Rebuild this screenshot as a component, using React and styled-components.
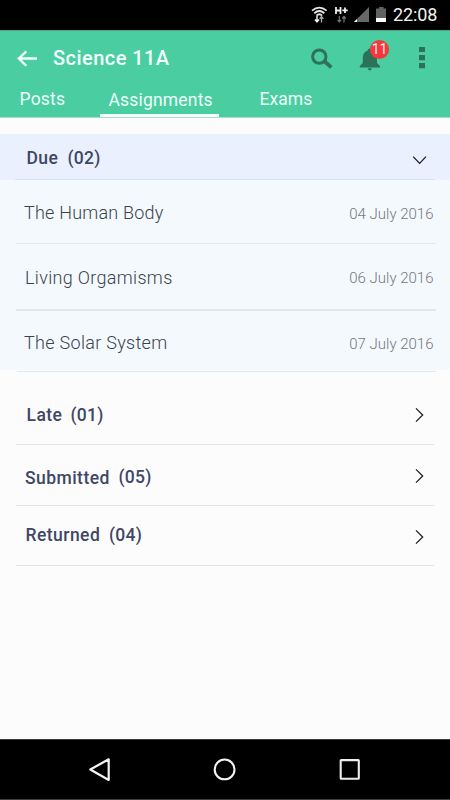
import React from 'react';
import styled, { createGlobalStyle } from 'styled-components';

const GlobalStyle = createGlobalStyle`
  * { box-sizing: border-box; }
  body { margin: 0; background: #fcfcfd; }
`;

const Screen = styled.div`
  width: 450px;
  height: 800px;
  display: flex;
  flex-direction: column;
  overflow: hidden;
  background: #fcfcfd;
  font-family: Roboto, "Noto Sans", sans-serif;
`;

const StatusBar = styled.div`
  height: 30px;
  flex: none;
  display: flex;
  justify-content: flex-end;
  align-items: flex-start;
  padding-right: 12px;
  background: #000;
`;

const Clock = styled.time`
  width: 45px;
  margin-left: 5px;
  padding-top: 5px;
  color: #f2f2f2;
  font-size: 18px;
  line-height: 20px;
  letter-spacing: -0.1px;
  white-space: nowrap;
`;

const Header = styled.header`
  height: 88px;
  flex: none;
  display: flex;
  flex-direction: column;
  background: #49cda1;
  border-top: 1px solid #45a688;
  border-bottom: 1px solid #a9dccb;
`;

const TitleBar = styled.div`
  height: 53px;
  display: flex;
  justify-content: space-between;
  padding-left: 16px;
`;

const TitleGroup = styled.div`
  display: flex;
`;

const Title = styled.h1`
  margin: 17px 0 0 13px;
  color: #f3fffb;
  font-size: 20px;
  font-weight: 500;
  line-height: 20px;
  letter-spacing: 0.45px;
`;

const Actions = styled.div`
  width: 142px;
  display: flex;
`;

const BellButton = styled.div`
  position: relative;
  width: 42px;
`;

const Badge = styled.span`
  position: absolute;
  left: 12px;
  top: 9px;
  width: 19px;
  height: 19px;
  border-radius: 50%;
  background: #f5383d;
  color: #ffe9e6;
  font-size: 14px;
  line-height: 19px;
  text-align: center;
`;

const Tabs = styled.nav`
  display: flex;
  height: 33px;
`;

const Tab = styled.div`
  width: ${(p) => p.$width}px;
  margin-left: ${(p) => p.$gap}px;
  padding: ${(p) => p.$top}px 0 0 ${(p) => p.$inset || 0}px;
  border-bottom: 3px solid ${(p) => (p.$active ? '#f4fffc' : 'transparent')};
  color: #effffa;
  font-size: 17.5px;
  line-height: 20px;
  letter-spacing: ${(p) => p.$spacing}px;
  white-space: nowrap;
`;

const Content = styled.main`
  flex: 1;
  padding-top: 16px;
`;

const Row = styled.div`
  height: ${(p) => p.$height}px;
  display: flex;
  flex-direction: column;
  background: ${(p) => p.$tone || 'transparent'};
`;

const RowBody = styled.div`
  flex: 1;
  min-height: 0;
  display: flex;
  justify-content: space-between;
  align-items: flex-start;
  padding-left: ${(p) => p.$left}px;
`;

const Rule = styled.div`
  height: ${(p) => p.$size || 1}px;
  flex: none;
  margin: 0 ${(p) => 450 - p.$to}px 0 ${(p) => p.$from}px;
  background: ${(p) => p.$color || '#dfe4e7'};
`;

const Section = styled.h2`
  display: flex;
  margin: ${(p) => p.$top}px 0 0;
  color: #3e4764;
  font-size: 17.5px;
  font-weight: 500;
  line-height: 20px;
  letter-spacing: 0.45px;
`;

const SectionName = styled.span`
  width: ${(p) => p.$width}px;
  white-space: nowrap;
`;

const Count = styled.span`
  margin-top: ${(p) => p.$shift || 0}px;
  letter-spacing: 0.3px;
`;

const ItemName = styled.span`
  margin-top: ${(p) => p.$top}px;
  color: #39434d;
  font-size: 18px;
  font-weight: 300;
  line-height: 20px;
  letter-spacing: ${(p) => p.$spacing}px;
`;

const ItemDate = styled.time`
  margin: ${(p) => p.$top}px 16.5px 0 0;
  color: #73787d;
  font-size: 15px;
  font-weight: 300;
  line-height: 20px;
`;

const ChevronSlot = styled.span`
  width: 38px;
  margin-top: ${(p) => p.$top}px;
  line-height: 0;
`;

const NavBar = styled.footer`
  height: 61px;
  flex: none;
  display: flex;
  padding-left: 62px;
  background: #000;
  border-top: 1px solid #3c3c3c;
  border-bottom: 1px solid #3c3c3c;
`;

const NavKey = styled.div`
  width: 125px;
  padding: 14px 0 0 22px;
  line-height: 0;
`;

const StatusIcons = () => (
  <svg width="80" height="30" viewBox="308 0 80 30">
    <g fill="none" stroke="#e8e8e8" strokeWidth="1.8">
      <path d="M312 10.6Q319.300 4.600 326.600 10.600" />
      <path d="M314.300 13.200Q319.300 8.900 324.300 13.200" />
      <path d="M316.500 15.600Q319.300 13 322.100 15.600" />
    </g>
    <path d="M317 16v5.500M315 19.500l2 2.500 2-2.500" fill="none" stroke="#fff" strokeWidth="1.400" />
    <path d="M321.500 22.500v-5M319.600 18.800l1.900-2.300 1.900 2.300" fill="none" stroke="#aaa" strokeWidth="1.300" />
    <path d="M336 7v7M340.500 7v7M336 10.500h4.500M342.300 10.300h5.400M345 7.600v5.400" fill="none" stroke="#eee" strokeWidth="1.800" />
    <path d="M339.300 16v6M337.500 19.800l1.800 2 1.800-2M344 22.500v-6M342.200 18.500l1.800-2 1.800 2" fill="none" stroke="#777" strokeWidth="1.200" />
    <path d="M369 7v15h-15z" fill="#66696a" />
    <path d="M357 19v3h-3z" fill="#fff" />
    <path d="M379 7h4.500v1.500h2.500v9.500h-10v-9.500h3z" fill="#5f6263" />
    <path d="M376 18h10v4h-10z" fill="#fff" />
  </svg>
);

const BackIcon = () => (
  <svg width="24" height="53" viewBox="16 31 24 53">
    <path d="M37 58.500H18.800M26.300 51.300L18.800 58.500L26.300 65.800" fill="none" stroke="#f3fffb" strokeWidth="2.300" />
  </svg>
);

const SearchIcon = () => (
  <svg width="50" height="53" viewBox="308 31 50 53">
    <circle cx="319.300" cy="56.600" r="6.700" fill="none" stroke="#2d7259" strokeWidth="3" />
    <path d="M324.200 61L331.300 67.300" stroke="#2d7259" strokeWidth="3.800" />
  </svg>
);

const BellIcon = () => (
  <svg width="42" height="53" viewBox="358 31 42 53">
    <path d="M369.700 48.500c1.300 0 2 .8 2 2 3.500 1 5.300 3.700 5.300 7.300v5.200l3 3v1.500h-20.200v-1.500l3-3v-5.200c0-3.600 1.600-6.300 4.900-7.300 0-1.200.7-2 2-2z" fill="#2c7159" />
    <path d="M367.800 68.300h4q-.3 2.300-2 2.300t-2-2.300z" fill="#2c7159" />
  </svg>
);

const MoreIcon = () => (
  <svg width="50" height="53" viewBox="400 31 50 53">
    <path d="M419 47h6v5h-6zM419 55h6v5.300h-6zM419 63h6v5.300h-6z" fill="#2c7159" />
  </svg>
);

const Chevron = ({ down }) => (
  <svg width="16" height="16" viewBox="0 0 16 16">
    <path
      d={down ? 'M1.200 4.700L7.600 11.300L14 4.700' : 'M4 1.400L10.700 8L4 14.600'}
      fill="none"
      stroke="#15171c"
      strokeWidth="1.200"
    />
  </svg>
);

const PANEL = '#f4f9fe';

const ITEMS = [
  { name: 'The Human Body', date: '04 July 2016', height: 64, left: 24, top: 23, dateTop: 24, spacing: 0.22, from: 16, tone: PANEL },
  { name: 'Living Orgamisms', date: '06 July 2016', height: 67, left: 25, top: 24, dateTop: 24, spacing: 0.32, from: 16, size: 2, tone: PANEL },
  { name: 'The Solar System', date: '07 July 2016', height: 61, left: 24, top: 22, dateTop: 23, spacing: 0.3, from: 17, tone: `linear-gradient(${PANEL} 59px, #fcfcfd 59px)` },
];

const SECTIONS = [
  { name: 'Late', count: '(01)', height: 73, left: 26.5, top: 33, width: 44, chevron: 35 },
  { name: 'Submitted', count: '(05)', height: 61, left: 25, top: 23, width: 93.5, chevron: 23, shift: -1 },
  { name: 'Returned', count: '(04)', height: 60, left: 25.5, top: 19, width: 83.5, chevron: 23 },
];

export default function App() {
  return (
    <Screen>
      <GlobalStyle />
      <StatusBar>
        <StatusIcons />
        <Clock>22:08</Clock>
      </StatusBar>
      <Header>
        <TitleBar>
          <TitleGroup>
            <BackIcon />
            <Title>Science 11A</Title>
          </TitleGroup>
          <Actions>
            <SearchIcon />
            <BellButton>
              <BellIcon />
              <Badge>11</Badge>
            </BellButton>
            <MoreIcon />
          </Actions>
        </TitleBar>
        <Tabs>
          <Tab $width={70} $gap={19.5} $top={5} $spacing={0.2}>Posts</Tab>
          <Tab $active $width={119} $gap={10.5} $inset={8.5} $top={6} $spacing={0.18}>Assignments</Tab>
          <Tab $width={70} $gap={40.5} $top={5} $spacing={0.05}>Exams</Tab>
        </Tabs>
      </Header>
      <Content>
        <Row $height={46} $tone="#eaf0fe">
          <RowBody $left={26.5}>
            <Section $top={14}>
              <SectionName $width={41}>Due</SectionName>
              <Count>(02)</Count>
            </Section>
            <ChevronSlot $top={18}><Chevron down /></ChevronSlot>
          </RowBody>
          <Rule $from={15} $to={435} $color="#d6e3ec" />
        </Row>
        {ITEMS.map((item) => (
          <Row key={item.name} $height={item.height} $tone={item.tone}>
            <RowBody $left={item.left}>
              <ItemName $top={item.top} $spacing={item.spacing}>{item.name}</ItemName>
              <ItemDate $top={item.dateTop}>{item.date}</ItemDate>
            </RowBody>
            <Rule $from={item.from} $to={436} $size={item.size} $color="#e1e7eb" />
          </Row>
        ))}
        {SECTIONS.map((section) => (
          <Row key={section.name} $height={section.height}>
            <RowBody $left={section.left}>
              <Section $top={section.top}>
                <SectionName $width={section.width}>{section.name}</SectionName>
                <Count $shift={section.shift}>{section.count}</Count>
              </Section>
              <ChevronSlot $top={section.chevron}><Chevron /></ChevronSlot>
            </RowBody>
            <Rule $from={16} $to={434} />
          </Row>
        ))}
      </Content>
      <NavBar>
        <NavKey>
          <svg width="32" height="32" viewBox="84 754 32 32">
            <path d="M108.700 759.300V780L90.300 769.500z" fill="none" stroke="#f4f4f4" strokeWidth="2.200" strokeLinejoin="round" />
          </svg>
        </NavKey>
        <NavKey>
          <svg width="32" height="32" viewBox="209 754 32 32">
            <circle cx="224.600" cy="769.400" r="9.900" fill="none" stroke="#f4f4f4" strokeWidth="2.100" />
          </svg>
        </NavKey>
        <NavKey>
          <svg width="32" height="32" viewBox="334 754 32 32">
            <rect x="340.700" y="760.100" width="18.100" height="18.600" rx=".5" fill="none" stroke="#eee" strokeWidth="2.100" />
          </svg>
        </NavKey>
      </NavBar>
    </Screen>
  );
}
